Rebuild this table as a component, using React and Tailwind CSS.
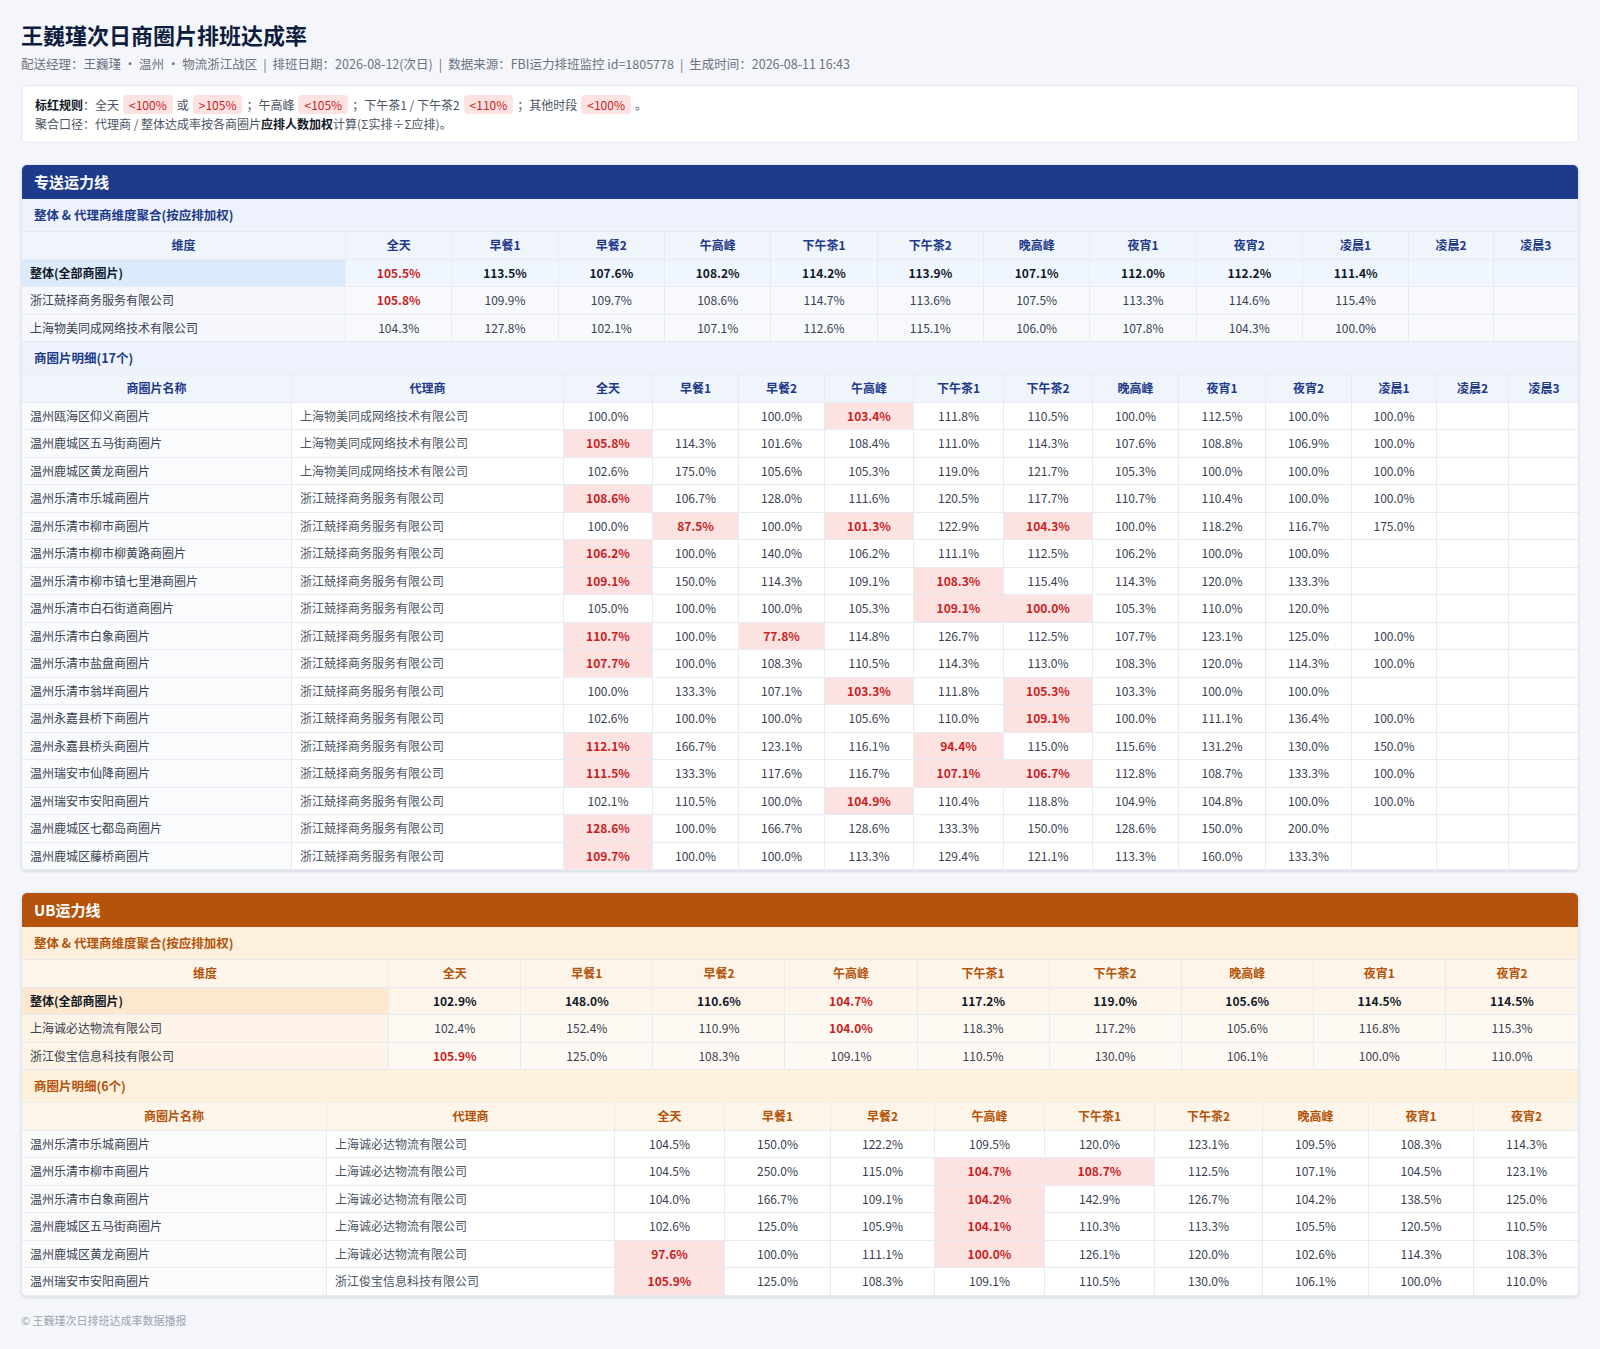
const ZS_COLS = ["全天", "早餐1", "早餐2", "午高峰", "下午茶1", "下午茶2", "晚高峰", "夜宵1", "夜宵2", "凌晨1", "凌晨2", "凌晨3"];
const UB_COLS = ["全天", "早餐1", "早餐2", "午高峰", "下午茶1", "下午茶2", "晚高峰", "夜宵1", "夜宵2"];

// "*" = 标红(底色+红字), "!" = 聚合行红字
const zsAgg = [
  ["整体(全部商圈片)", "105.5!", "113.5", "107.6", "108.2", "114.2", "113.9", "107.1", "112.0", "112.2", "111.4", "", ""],
  ["浙江兢择商务服务有限公司", "105.8!", "109.9", "109.7", "108.6", "114.7", "113.6", "107.5", "113.3", "114.6", "115.4", "", ""],
  ["上海物美同成网络技术有限公司", "104.3", "127.8", "102.1", "107.1", "112.6", "115.1", "106.0", "107.8", "104.3", "100.0", "", ""],
];

const WM = "上海物美同成网络技术有限公司";
const JZ = "浙江兢择商务服务有限公司";
const zsRows = [
  ["温州瓯海区仰义商圈片", WM, "100.0", "", "100.0", "103.4*", "111.8", "110.5", "100.0", "112.5", "100.0", "100.0", "", ""],
  ["温州鹿城区五马街商圈片", WM, "105.8*", "114.3", "101.6", "108.4", "111.0", "114.3", "107.6", "108.8", "106.9", "100.0", "", ""],
  ["温州鹿城区黄龙商圈片", WM, "102.6", "175.0", "105.6", "105.3", "119.0", "121.7", "105.3", "100.0", "100.0", "100.0", "", ""],
  ["温州乐清市乐城商圈片", JZ, "108.6*", "106.7", "128.0", "111.6", "120.5", "117.7", "110.7", "110.4", "100.0", "100.0", "", ""],
  ["温州乐清市柳市商圈片", JZ, "100.0", "87.5*", "100.0", "101.3*", "122.9", "104.3*", "100.0", "118.2", "116.7", "175.0", "", ""],
  ["温州乐清市柳市柳黄路商圈片", JZ, "106.2*", "100.0", "140.0", "106.2", "111.1", "112.5", "106.2", "100.0", "100.0", "", "", ""],
  ["温州乐清市柳市镇七里港商圈片", JZ, "109.1*", "150.0", "114.3", "109.1", "108.3*", "115.4", "114.3", "120.0", "133.3", "", "", ""],
  ["温州乐清市白石街道商圈片", JZ, "105.0", "100.0", "100.0", "105.3", "109.1*", "100.0*", "105.3", "110.0", "120.0", "", "", ""],
  ["温州乐清市白象商圈片", JZ, "110.7*", "100.0", "77.8*", "114.8", "126.7", "112.5", "107.7", "123.1", "125.0", "100.0", "", ""],
  ["温州乐清市盐盘商圈片", JZ, "107.7*", "100.0", "108.3", "110.5", "114.3", "113.0", "108.3", "120.0", "114.3", "100.0", "", ""],
  ["温州乐清市翁垟商圈片", JZ, "100.0", "133.3", "107.1", "103.3*", "111.8", "105.3*", "103.3", "100.0", "100.0", "", "", ""],
  ["温州永嘉县桥下商圈片", JZ, "102.6", "100.0", "100.0", "105.6", "110.0", "109.1*", "100.0", "111.1", "136.4", "100.0", "", ""],
  ["温州永嘉县桥头商圈片", JZ, "112.1*", "166.7", "123.1", "116.1", "94.4*", "115.0", "115.6", "131.2", "130.0", "150.0", "", ""],
  ["温州瑞安市仙降商圈片", JZ, "111.5*", "133.3", "117.6", "116.7", "107.1*", "106.7*", "112.8", "108.7", "133.3", "100.0", "", ""],
  ["温州瑞安市安阳商圈片", JZ, "102.1", "110.5", "100.0", "104.9*", "110.4", "118.8", "104.9", "104.8", "100.0", "100.0", "", ""],
  ["温州鹿城区七都岛商圈片", JZ, "128.6*", "100.0", "166.7", "128.6", "133.3", "150.0", "128.6", "150.0", "200.0", "", "", ""],
  ["温州鹿城区藤桥商圈片", JZ, "109.7*", "100.0", "100.0", "113.3", "129.4", "121.1", "113.3", "160.0", "133.3", "", "", ""],
];

const ubAgg = [
  ["整体(全部商圈片)", "102.9", "148.0", "110.6", "104.7!", "117.2", "119.0", "105.6", "114.5", "114.5"],
  ["上海诚必达物流有限公司", "102.4", "152.4", "110.9", "104.0!", "118.3", "117.2", "105.6", "116.8", "115.3"],
  ["浙江俊宝信息科技有限公司", "105.9!", "125.0", "108.3", "109.1", "110.5", "130.0", "106.1", "100.0", "110.0"],
];

const CB = "上海诚必达物流有限公司";
const ubRows = [
  ["温州乐清市乐城商圈片", CB, "104.5", "150.0", "122.2", "109.5", "120.0", "123.1", "109.5", "108.3", "114.3"],
  ["温州乐清市柳市商圈片", CB, "104.5", "250.0", "115.0", "104.7*", "108.7*", "112.5", "107.1", "104.5", "123.1"],
  ["温州乐清市白象商圈片", CB, "104.0", "166.7", "109.1", "104.2*", "142.9", "126.7", "104.2", "138.5", "125.0"],
  ["温州鹿城区五马街商圈片", CB, "102.6", "125.0", "105.9", "104.1*", "110.3", "113.3", "105.5", "120.5", "110.5"],
  ["温州鹿城区黄龙商圈片", CB, "97.6*", "100.0", "111.1", "100.0*", "126.1", "120.0", "102.6", "114.3", "108.3"],
  ["温州瑞安市安阳商圈片", "浙江俊宝信息科技有限公司", "105.9*", "125.0", "108.3", "109.1", "110.5", "130.0", "106.1", "100.0", "110.0"],
];

const blue = {
  head: "bg-[#1e3a8a]",
  band: "bg-[#edf2fc] text-[#1e3a8a]",
  th: "bg-[#f0f4fb] text-[#1e3a8a]",
  totalFirst: "bg-[#dcebfc]",
  totalRow: "bg-[#eff6ff]",
  aggFirst: "bg-[#f6f8fd]",
  aggRow: "bg-[#f7f9fd]",
  name: "bg-[#fafbfd]",
};
const orange = {
  head: "bg-[#b45309]",
  band: "bg-[#fdf0dd] text-[#b45309]",
  th: "bg-[#fdf5ea] text-[#b45309]",
  totalFirst: "bg-[#fde8cf]",
  totalRow: "bg-[#fdf5ea]",
  aggFirst: "bg-[#fdf3e6]",
  aggRow: "bg-[#fefaf3]",
  name: "bg-[#fbfbfc]",
};

const cell = "border-r border-b border-[#e8ebf2] last:border-r-0 py-[5px] leading-[16.5px]";

function Num({ v, bold }) {
  const hot = v.endsWith("*");
  const red = v.endsWith("!");
  const t = v.replace(/[*!]$/, "");
  let tone = bold ? "font-bold text-[#111827]" : "text-[#374151]";
  if (hot) tone = "bg-[#fde2e2] text-[#c81e1e] font-bold";
  else if (red) tone = "text-[#c81e1e] font-bold";
  return <td className={`${cell} px-1 text-center ${tone}`}>{t ? t + "%" : ""}</td>;
}

function Band({ theme, children }) {
  return (
    <div className={`${theme.band} px-3 py-[8px] leading-[16px] text-[12.5px] font-bold border-b border-[#e8ebf2]`}>
      {children}
    </div>
  );
}

function AggTable({ theme, cols, widths, rows }) {
  return (
    <table className="w-full table-fixed border-separate border-spacing-0 text-[12px]">
      <colgroup>
        {widths.map((w, i) => (
          <col key={i} className={w} />
        ))}
      </colgroup>
      <thead>
        <tr className={theme.th}>
          <th className={`${cell} font-bold`}>维度</th>
          {cols.map((c) => (
            <th key={c} className={`${cell} font-bold`}>{c}</th>
          ))}
        </tr>
      </thead>
      <tbody>
        {rows.map((r, i) => (
          <tr key={r[0]} className={i === 0 ? theme.totalRow : theme.aggRow}>
            <td
              className={`${cell} px-2 text-left ${
                i === 0 ? theme.totalFirst + " font-bold text-[#111827]" : theme.aggFirst + " text-[#374151]"
              }`}
            >
              {r[0]}
            </td>
            {r.slice(1).map((v, j) => (
              <Num key={j} v={v} bold={i === 0} />
            ))}
          </tr>
        ))}
      </tbody>
    </table>
  );
}

function DetailTable({ theme, cols, widths, rows }) {
  return (
    <table className="w-full table-fixed border-separate border-spacing-0 text-[12px]">
      <colgroup>
        {widths.map((w, i) => (
          <col key={i} className={w} />
        ))}
      </colgroup>
      <thead>
        <tr className={theme.th}>
          <th className={`${cell} font-bold`}>商圈片名称</th>
          <th className={`${cell} font-bold`}>代理商</th>
          {cols.map((c) => (
            <th key={c} className={`${cell} font-bold`}>{c}</th>
          ))}
        </tr>
      </thead>
      <tbody>
        {rows.map((r) => (
          <tr key={r[0]} className="bg-white">
            <td className={`${cell} px-2 text-left text-[#374151] ${theme.name}`}>{r[0]}</td>
            <td className={`${cell} px-2 text-left text-[#4b5563]`}>{r[1]}</td>
            {r.slice(2).map((v, j) => (
              <Num key={j} v={v} />
            ))}
          </tr>
        ))}
      </tbody>
    </table>
  );
}

function Section({ theme, title, children }) {
  return (
    <section className="mt-[21px] overflow-hidden rounded-md border border-[#e3e7ef] bg-white shadow-sm">
      <div className={`${theme.head} h-[34px] px-3 flex items-center text-white text-[15px] font-bold`}>{title}</div>
      {children}
    </section>
  );
}

function Tag({ children }) {
  return <span className="mx-1 rounded bg-[#fde2e2] px-[6px] py-[1px] text-[#c81e1e]">{children}</span>;
}

export default function App() {
  return (
    <div className="min-h-screen bg-[#f4f6fb] px-[21px] pt-[19px] pb-[21px] font-['Noto_Sans_CJK_SC','Noto_Sans',sans-serif] text-[#374151]">
      <h1 className="text-[22px] leading-[30px] font-bold text-[#0f1d3d]">王巍瑾次日商圈片排班达成率</h1>
      <p className="mt-[6px] text-[12.5px] leading-[18px] text-[#6b7280]">
        配送经理：王巍瑾 · 温州 · 物流浙江战区<span className="mx-[6px]">|</span>排班日期：2026-08-12(次日)
        <span className="mx-[6px]">|</span>数据来源：FBI运力排班监控 id=1805778<span className="mx-[6px]">|</span>生成时间：2026-08-11 16:43
      </p>

      <div className="mt-[12px] rounded-md border border-[#e3e7ef] bg-white px-[13px] py-[9px] text-[12px] leading-[19px] text-[#4b5563]">
        <div>
          <b className="text-[#111827]">标红规则</b>：全天<Tag>&lt;100%</Tag>或<Tag>&gt;105%</Tag>；午高峰<Tag>&lt;105%</Tag>；下午茶1 / 下午茶2<Tag>&lt;110%</Tag>；其他时段<Tag>&lt;100%</Tag>。
        </div>
        <div>
          聚合口径：代理商 / 整体达成率按各商圈片<b className="text-[#111827]">应排人数加权</b>计算(Σ实排÷Σ应排)。
        </div>
      </div>

      <Section theme={blue} title="专送运力线">
        <Band theme={blue}>整体 &amp; 代理商维度聚合(按应排加权)</Band>
        <AggTable
          theme={blue}
          cols={ZS_COLS}
          rows={zsAgg}
          widths={["w-[323px]", "w-[106px]", "w-[106px]", "w-[106px]", "w-[106px]", "w-[106px]", "w-[106px]", "w-[106px]", "w-[106px]", "w-[106px]", "w-[106px]", "w-[84px]", "w-[84px]"]}
        />
        <Band theme={blue}>商圈片明细(17个)</Band>
        <DetailTable
          theme={blue}
          cols={ZS_COLS}
          rows={zsRows}
          widths={["w-[270px]", "w-[272px]", "w-[89px]", "w-[86px]", "w-[86px]", "w-[89px]", "w-[90px]", "w-[89px]", "w-[86px]", "w-[87px]", "w-[86px]", "w-[85px]", "w-[72px]", "w-[70px]"]}
        />
      </Section>

      <Section theme={orange} title="UB运力线">
        <Band theme={orange}>整体 &amp; 代理商维度聚合(按应排加权)</Band>
        <AggTable
          theme={orange}
          cols={UB_COLS}
          rows={ubAgg}
          widths={["w-[367px]", "w-[132px]", "w-[132px]", "w-[132px]", "w-[132px]", "w-[132px]", "w-[132px]", "w-[132px]", "w-[132px]", "w-[132px]"]}
        />
        <Band theme={orange}>商圈片明细(6个)</Band>
        <DetailTable
          theme={orange}
          cols={UB_COLS}
          rows={ubRows}
          widths={["w-[305px]", "w-[288px]", "w-[110px]", "w-[106px]", "w-[104px]", "w-[110px]", "w-[110px]", "w-[108px]", "w-[106px]", "w-[105px]", "w-[105px]"]}
        />
      </Section>

      <p className="mt-[15px] text-[11px] leading-[16px] text-[#9ca3af]">© 王巍瑾次日排班达成率数据播报</p>
    </div>
  );
}
